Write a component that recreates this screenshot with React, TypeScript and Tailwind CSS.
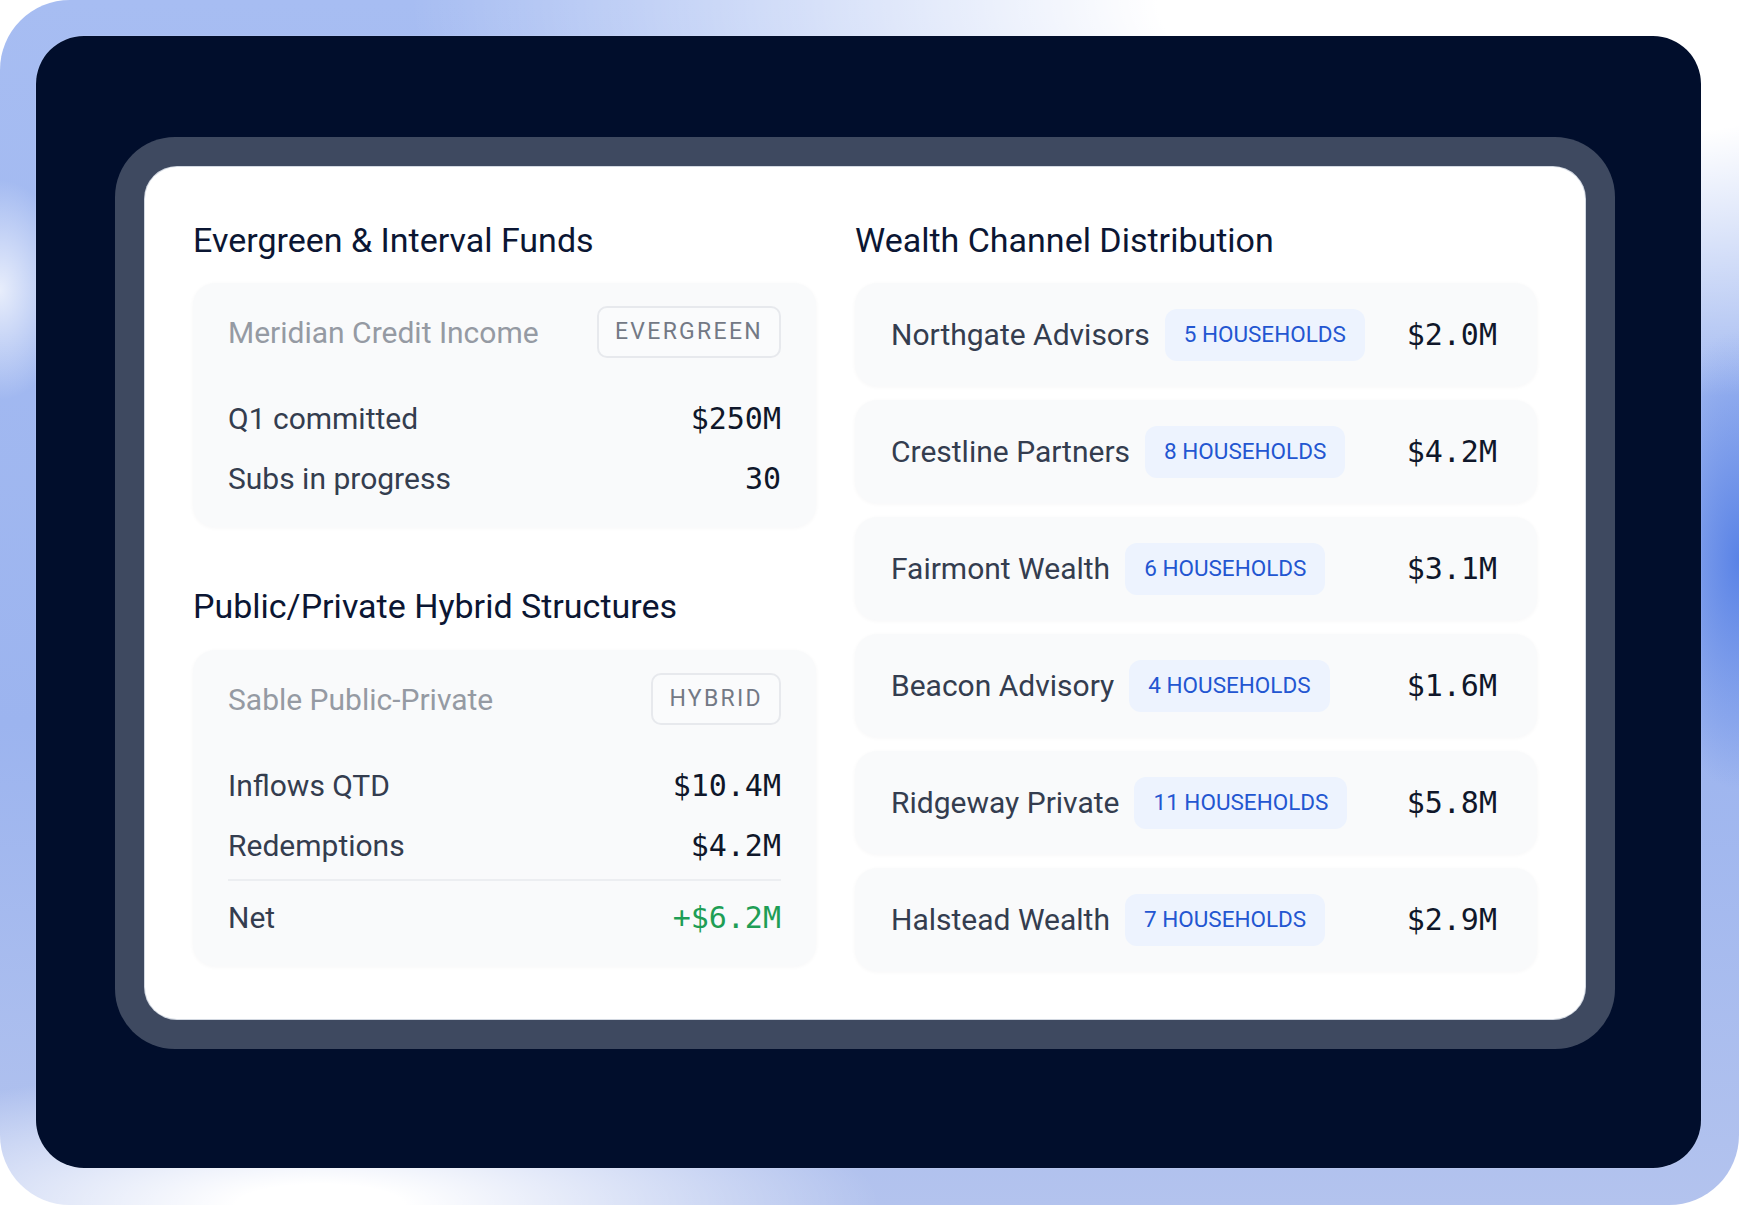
import React from 'react';

const sans = "font-['Roboto','Liberation_Sans',sans-serif]";
const mono = "font-['DejaVu_Sans_Mono','Liberation_Mono',monospace] slashed-zero";

interface Advisor {
    name: string;
    households: number;
    amount: string;
}

const advisors: Advisor[] = [
    { name: 'Northgate Advisors', households: 5, amount: '$2.0M' },
    { name: 'Crestline Partners', households: 8, amount: '$4.2M' },
    { name: 'Fairmont Wealth', households: 6, amount: '$3.1M' },
    { name: 'Beacon Advisory', households: 4, amount: '$1.6M' },
    { name: 'Ridgeway Private', households: 11, amount: '$5.8M' },
    { name: 'Halstead Wealth', households: 7, amount: '$2.9M' },
];

const SectionTitle: React.FC<{ children: React.ReactNode }> = ({ children }) => (
    <h2 className="text-[34px] leading-[40px] text-[#0b1633] font-normal">{children}</h2>
);

const Tag: React.FC<{ children: React.ReactNode }> = ({ children }) => (
    <span className="h-[52px] px-[16px] flex items-center rounded-[10px] border-2 border-[#e7e9ed] bg-[#fafbfc] text-[23px] tracking-[0.1em] text-[#737985]">
        {children}
    </span>
);

const StatRow: React.FC<{ label: string; value: string; positive?: boolean }> = ({ label, value, positive }) => (
    <div className="flex items-center justify-between h-[40px]">
        <span className="text-[30px] leading-[40px] text-[#343d4f]">{label}</span>
        <span className={`${mono} text-[30px] leading-[40px] ${positive ? 'text-[#1e9e55]' : 'text-[#0f172a]'}`}>
            {value}
        </span>
    </div>
);

const FundCard: React.FC<{ name: string; tag: string; children: React.ReactNode }> = ({ name, tag, children }) => (
    <div className="rounded-[22px] bg-[#f9fafb] shadow-[0_1px_4px_rgba(15,23,42,0.04)] px-[35px] pt-[23px] pb-[28px]">
        <div className="flex items-center justify-between">
            <span className="text-[30px] text-[#959aa3]">{name}</span>
            <Tag>{tag}</Tag>
        </div>
        <div className="mt-[41px] flex flex-col gap-[20px]">{children}</div>
    </div>
);

const AdvisorRow: React.FC<{ advisor: Advisor }> = ({ advisor }) => (
    <div className="h-[103px] rounded-[22px] bg-[#f9fafb] shadow-[0_1px_4px_rgba(15,23,42,0.04)] pl-[36px] pr-[40px] flex items-center">
        <span className="text-[30px] text-[#343d4f]">{advisor.name}</span>
        <span className="ml-[15px] h-[52px] px-[19px] flex items-center rounded-[12px] bg-[#edf3fe] text-[22.5px] text-[#2356d1]">
            {advisor.households} HOUSEHOLDS
        </span>
        <span className={`${mono} ml-auto text-[30px] text-[#0f172a]`}>{advisor.amount}</span>
    </div>
);

const App: React.FC = () => {
    return (
        <div className={`w-[1739px] h-[1205px] bg-white ${sans}`}>
            <div className="h-full rounded-[70px] pt-[36px] pl-[36px] pr-[38px] pb-[37px] bg-[radial-gradient(ellipse_1150px_400px_at_1560px_0px,#ffffff_35%,rgba(255,255,255,0)_100%),radial-gradient(ellipse_560px_140px_at_320px_1205px,#ffffff_15%,rgba(255,255,255,0)_100%),radial-gradient(ellipse_90px_230px_at_1739px_560px,#5a83e6_0%,rgba(90,131,230,0)_100%),radial-gradient(ellipse_70px_110px_at_0px_290px,rgba(255,255,255,0.75)_0%,rgba(255,255,255,0)_100%),linear-gradient(180deg,#a7bdf2_0%,#9cb4ef_60%,#b3c3ee_100%)]">
                <div className="h-full rounded-[48px] bg-[#010e2c] shadow-[0_0_0_1px_rgba(255,255,255,0.08)] pt-[101px] pl-[79px] pr-[86px]">
                    <div className="rounded-[60px] bg-[#3e4960] p-[30px]">
                        <div className="rounded-[32px] bg-white shadow-[0_0_0_1px_rgba(226,232,240,0.9)] px-[48px] pt-[53px] pb-[48px]">
                            <div className="grid grid-cols-[623px_1fr] gap-x-[39px]">
                                <div className="flex flex-col">
                                    <SectionTitle>Evergreen &amp; Interval Funds</SectionTitle>
                                    <div className="mt-[23px]">
                                        <FundCard name="Meridian Credit Income" tag="EVERGREEN">
                                            <StatRow label="Q1 committed" value="$250M" />
                                            <StatRow label="Subs in progress" value="30" />
                                        </FundCard>
                                    </div>
                                    <div className="mt-[59px]">
                                        <SectionTitle>Public/Private Hybrid Structures</SectionTitle>
                                    </div>
                                    <div className="mt-[24px]">
                                        <FundCard name="Sable Public-Private" tag="HYBRID">
                                            <StatRow label="Inflows QTD" value="$10.4M" />
                                            <div className="flex flex-col">
                                                <StatRow label="Redemptions" value="$4.2M" />
                                                <div className="h-[2px] bg-[#eceef1] mt-[13px] mb-[-3px]" />
                                            </div>
                                            <StatRow label="Net" value="+$6.2M" positive />
                                        </FundCard>
                                    </div>
                                </div>
                                <div className="flex flex-col">
                                    <SectionTitle>Wealth Channel Distribution</SectionTitle>
                                    <div className="mt-[23px] flex flex-col gap-[14px]">
                                        {advisors.map((a) => (
                                            <AdvisorRow key={a.name} advisor={a} />
                                        ))}
                                    </div>
                                </div>
                            </div>
                        </div>
                    </div>
                </div>
            </div>
        </div>
    );
};

export default App;
